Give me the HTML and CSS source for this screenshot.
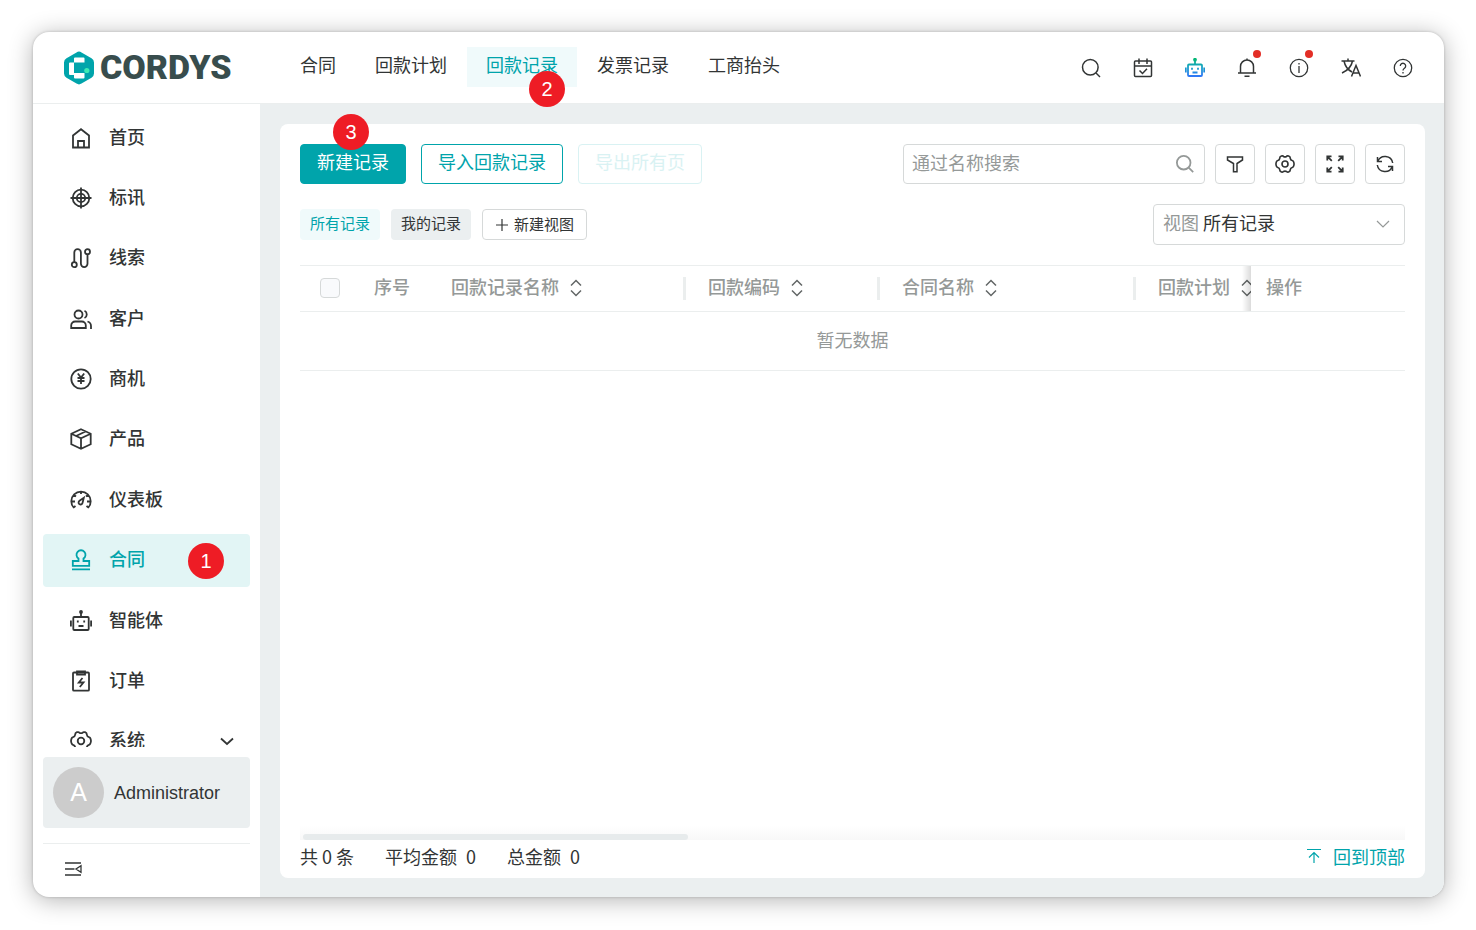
FILE: index.html
```html
<!DOCTYPE html>
<html lang="zh-CN">
<head>
<meta charset="utf-8">
<title>CORDYS 回款记录</title>
<link rel="stylesheet" href="styles.css">
</head>
<body>
<div class="window">
  <header class="topbar">
    <a class="logo" href="#">
      <svg class="logo-mark" viewBox="0 0 32 34"><path d="M13.500 1.400Q16-.2 18.500 1.400L28.500 7.300Q31 8.800 31 11.500v11q0 2.700-2.500 4.200l-10 5.900Q16 34.200 13.500 32.600L3.500 26.700Q1 25.200 1 22.500v-11Q1 8.800 3.500 7.300z" fill="#00a4ab"/><path d="M11 7.500q0-1 1-1H20.500q1 0 1 1v4H11v10.500h10.500v4.500q0 1-1 1H12q-1 0-1-1V24H7q-1 0-1-1V12.500q0-1 1-1h4z" fill="#fff"/><circle cx="23.800" cy="19.500" r="2.600" fill="#3ceab4"/></svg>
      <span class="logo-text">CORDYS</span>
    </a>
    <nav class="tabs">
      <a class="tab" href="#">合同</a>
      <a class="tab" href="#">回款计划</a>
      <a class="tab active" href="#">回款记录<span class="step step-tab">2</span></a>
      <a class="tab" href="#">发票记录</a>
      <a class="tab" href="#">工商抬头</a>
    </nav>
    <div class="actions">
      <button class="icon-btn" aria-label="搜索"><svg viewBox="0 0 20 20"><circle cx="9.300" cy="9.300" r="7.800"/><path d="m15 15 4 4"/></svg></button>
      <button class="icon-btn" aria-label="日程"><svg viewBox="0 0 20 20"><rect x="1.500" y="3" width="17" height="15.500" rx="1"/><path d="M1.500 8h17M6 .5V6M14 .5V6M6.500 12.500l3 3 4.500-4.700"/></svg></button>
      <button class="icon-btn" aria-label="智能助手"><svg viewBox="0 0 20 20" class="bot"><defs><linearGradient id="botGrad" gradientUnits="userSpaceOnUse" x1="0" y1="0" x2="0" y2="20"><stop offset="0" stop-color="#00b96b"/><stop offset=".4" stop-color="#14a5c0"/><stop offset="1" stop-color="#3370ff"/></linearGradient></defs><rect x="3" y="6.500" width="14" height="11.500" rx="1"/><path d="M10 2v4.500M.8 9.500v5M19.200 9.500v5M7 9.700v2M13 9.700v2M7.500 14.500h5"/><circle cx="10" cy="1.800" r="1"/></svg></button>
      <button class="icon-btn" aria-label="通知"><svg viewBox="0 0 20 20"><path d="M1 15h18M3.500 15V8.500a6.500 6.500 0 0 1 13 0V15M10 .5v2M7.500 18.300h5"/></svg><span class="dot"></span></button>
      <button class="icon-btn thin" aria-label="信息"><svg viewBox="0 0 20 20"><circle cx="10" cy="10" r="8.700"/><path d="M10 8v7"/><path d="M10 5v1.500"/></svg><span class="dot"></span></button>
      <button class="icon-btn" aria-label="语言"><svg viewBox="0 0 20 20"><path d="M.5 3h13M7 .5V3M3 3c1 5 4 9 8 11M11.500 3C10.500 8.500 6.500 12.500 1 15M10.500 18.500l4.500-11 4.500 11M12 15h6"/></svg></button>
      <button class="icon-btn thin" aria-label="帮助"><svg viewBox="0 0 20 20"><circle cx="10" cy="10" r="8.700"/><path d="M7.300 8a2.700 2.700 0 1 1 4.200 2.200Q10 11.200 10 12.500M10 14v1.500"/></svg></button>
    </div>
  </header>

  <div class="body">
    <aside class="sidebar">
      <nav class="menu">
        <div class="menu-list">
        <a class="item" href="#"><svg viewBox="0 0 22 22"><path d="M3 8.500l8-6.300 8 6.300v12H3zM8 20.500V14h6v6.500"/></svg>首页</a>
        <a class="item" href="#"><svg viewBox="0 0 22 22"><circle cx="11" cy="11" r="8.300"/><circle cx="11" cy="11" r="4.200"/><path d="M11 .5v21M.5 11h21"/></svg>标讯</a>
        <a class="item" href="#"><svg viewBox="0 0 22 22"><circle cx="4.300" cy="17.700" r="2.500"/><circle cx="17.500" cy="4.700" r="2.500"/><path d="M4.300 15V5.500a3.300 3.300 0 0 1 6.600 0v11.300a3.300 3.300 0 0 0 6.600 0V7.500"/></svg>线索</a>
        <a class="item" href="#"><svg viewBox="0 0 22 22"><circle cx="8.500" cy="6.500" r="4"/><path d="M1.200 20v-2.500a4 4 0 0 1 4-4h6.600a4 4 0 0 1 4 4V20zM14.500 2.800a4 4 0 0 1 0 7.200M17.500 13.500q3.500 1 3.500 4.500v3"/></svg>客户</a>
        <a class="item" href="#"><svg viewBox="0 0 22 22"><circle cx="11" cy="11" r="9.700"/><path d="m7.800 5.500 3.200 4 3.200-4M11 9.500V16M7.500 10h7M7.500 13h7"/></svg>商机</a>
        <a class="item" href="#"><svg viewBox="0 0 22 22"><path d="m11 1.300 9.700 4.500v10.500L11 20.800l-9.700-4.500V5.800zM1.300 5.800l9.700 4.500 9.700-4.500M11 10.300v10.500M6 8l9.500-4.500"/></svg>产品</a>
        <a class="item" href="#"><svg viewBox="0 0 22 22"><path d="M4 19a9.700 9.700 0 1 1 14 0M11 2.500V5M4 6l2 1.500M18 6l-2 1.500M1.500 12.500H5M17 12.500h3.500M3.500 18.500l2-1.500M18.500 18.500l-2-1.500M13.800 8.800 12.500 14a2 2 0 1 1-3-2.200z"/></svg>仪表板</a>
        <a class="item active" href="#"><svg viewBox="0 0 22 22"><path d="M2.800 16.800V12h5.700V9.500a4.500 4.500 0 1 1 5 0V12h5.700v4.800zM2 20.300h18"/></svg>合同<span class="step step-menu">1</span></a>
        <a class="item" href="#"><svg viewBox="0 0 22 22"><rect x="3.300" y="7" width="15.400" height="13" rx="1"/><path d="M11 2v5M.9 10.500v6M21.100 10.500v6M7.800 10.500v2M14.200 10.500v2M8.500 16h5"/><circle cx="11" cy="2" r="1"/></svg>智能体</a>
        <a class="item" href="#"><svg viewBox="0 0 22 22"><rect x="3" y="2.500" width="16" height="18.200" rx="1"/><path d="M7 1.300h8v3.200H7zM12.500 8 8.800 12.500h4.700L9.800 17"/></svg>订单</a>
        <a class="item" href="#"><svg viewBox="0 0 22 22"><path d="M7 2.200Q9 1.800 9.300 2.700q1.700 1 3.400 0Q13 1.800 15 2.200q2 .8 1.800 2.500.3 2 2.200 2.500 1.600.3 2 3.800-.4 3.500-2 3.800-1.900.5-2.200 2.500.2 1.700-1.800 2.500-2 .4-2.300-.5-1.700-1-3.400 0-.3.900-2.300.5-2-.8-1.800-2.500-.3-2-2.200-2.500Q1.400 14.500 1 11q.4-3.500 2-3.800 1.900-.5 2.200-2.500Q5 3 7 2.200z"/><circle cx="11" cy="11" r="3.300"/></svg>系统<svg class="caret" viewBox="0 0 14 14"><path d="m1 4.500 6 5.500 6-5.500"/></svg></a>
        </div>
      </nav>
      <button class="user"><span class="avatar">A</span>Administrator</button>
      <div class="collapse"><button class="icon-btn thin" aria-label="收起菜单"><svg viewBox="0 0 20 20"><path d="M2 4h16M2 10h9.500M2 16h16M18 6.800v6.400L13 10z"/></svg></button></div>
    </aside>

    <main class="content">
      <section class="card">
        <div class="toolbar">
          <div class="buttons">
            <button class="btn primary">新建记录<span class="step step-new">3</span></button>
            <button class="btn">导入回款记录</button>
            <button class="btn" disabled>导出所有页</button>
          </div>
          <div class="tools">
            <label class="search"><input type="text" placeholder="通过名称搜索" aria-label="通过名称搜索"><svg viewBox="0 0 20 20"><circle cx="8.700" cy="8.700" r="6.800"/><path d="m13.700 13.700 4.500 4.500"/></svg></label>
            <button class="tool" aria-label="筛选"><svg viewBox="0 0 20 20"><path d="M2.500 3h15v3L12 9.500v8.200H8.500V9.500L2.500 6z"/></svg></button>
            <button class="tool bold" aria-label="设置"><svg viewBox="0 0 22 22"><path d="M7 2.200Q9 1.800 9.300 2.700q1.700 1 3.400 0Q13 1.800 15 2.200q2 .8 1.800 2.500.3 2 2.200 2.500 1.600.3 2 3.800-.4 3.500-2 3.800-1.900.5-2.200 2.500.2 1.700-1.800 2.500-2 .4-2.300-.5-1.700-1-3.400 0-.3.900-2.300.5-2-.8-1.800-2.500-.3-2-2.200-2.500Q1.400 14.500 1 11q.4-3.500 2-3.800 1.900-.5 2.200-2.500Q5 3 7 2.200z"/><circle cx="11" cy="11" r="3.300"/></svg></button>
            <button class="tool bold" aria-label="全屏"><svg viewBox="0 0 20 20"><path d="M2.300 6.500V2.300h4.200M2.300 2.300l4.500 4.500M13.500 2.300h4.200v4.200M17.700 2.300l-4.500 4.500M2.300 13.500v4.200h4.200M2.300 17.700l4.500-4.500M17.700 13.500v4.200h-4.200M17.700 17.700l-4.500-4.500"/></svg></button>
            <button class="tool" aria-label="刷新"><svg viewBox="0 0 20 20"><path d="M2.500 3v4.500H7M2.700 7.500a7.800 7.800 0 0 1 15 1.500M17.500 17v-4.500H13M17.300 12.500a7.800 7.800 0 0 1-15-1.500"/></svg></button>
          </div>
        </div>

        <div class="views">
          <div class="chips">
            <button class="chip active">所有记录</button>
            <button class="chip">我的记录</button>
            <button class="chip add"><svg viewBox="0 0 14 14"><path d="M7 1v12M1 7h12"/></svg>新建视图</button>
          </div>
          <div class="view-select">
            <label for="view">视图</label>
            <select id="view"><option>所有记录</option></select>
            <svg viewBox="0 0 14 14"><path d="m1 4 6 6 6-6"/></svg>
          </div>
        </div>

        <div class="table-wrap">
          <table class="grid">
            <colgroup><col class="c-check"><col class="c-no"><col class="c-name"><col class="c-code"><col class="c-contract"><col class="c-plan"><col></colgroup>
            <thead>
              <tr>
                <th><div class="cell"><input type="checkbox" class="check" aria-label="全选"></div></th>
                <th><div class="cell">序号</div></th>
                <th><div class="cell">回款记录名称<svg class="sort" viewBox="0 0 12 18"><path d="m1 6.500 5-5 5 5M1 11.500l5 5 5-5"/></svg><i class="divider"></i></div></th>
                <th><div class="cell">回款编码<svg class="sort" viewBox="0 0 12 18"><path d="m1 6.500 5-5 5 5M1 11.500l5 5 5-5"/></svg><i class="divider"></i></div></th>
                <th><div class="cell">合同名称<svg class="sort" viewBox="0 0 12 18"><path d="m1 6.500 5-5 5 5M1 11.500l5 5 5-5"/></svg><i class="divider"></i></div></th>
                <th><div class="cell">回款计划<svg class="sort" viewBox="0 0 12 18"><path d="m1 6.500 5-5 5 5M1 11.500l5 5 5-5"/></svg></div></th>
                <th class="fixed"><div class="cell">操作</div></th>
              </tr>
            </thead>
            <tbody><tr><td colspan="7">暂无数据</td></tr></tbody>
          </table>
        </div>

        <div class="scroll-track"><div class="scroll-thumb"></div></div>
        <footer class="summary">
          <span>共 0 条</span>
          <span class="stat"><span>平均金额</span><span>0</span></span>
          <span class="stat"><span>总金额</span><span>0</span></span>
          <a class="to-top" href="#"><svg viewBox="0 0 16 16"><path d="M1 1.500h14M8 15V5M3 9.500 8 4.500l5 5"/></svg>回到顶部</a>
        </footer>
      </section>
    </main>
  </div>
</div>
</body>
</html>
```
FILE: styles.css
```css
* { box-sizing: border-box; }
:root {
  --teal: #00a4ab;
  --ink: #323535;
  --muted: #959998;
  --line: #ebeeee;
  --border: #d6d9d9;
  --panel: #ebeff0;
}
body {
  margin: 0;
  height: 100vh;
  padding: 32px 32px 33px 33px;
  display: flex;
  background: #fff;
  color: var(--ink);
  font: 18px/24px "Liberation Sans", "Noto Sans CJK SC", sans-serif;
}
a { color: inherit; text-decoration: none; }
button, input, select { font: inherit; color: inherit; }
button { padding: 0; border: 0; background: none; cursor: pointer; }
svg { fill: none; stroke: currentColor; stroke-width: 1.5; flex: none; }

.window {
  flex: 1;
  min-width: 0;
  display: flex;
  flex-direction: column;
  border-radius: 16px;
  overflow: hidden;
  background: #fff;
  box-shadow: 0 0 3px rgba(0, 0, 0, .2), 0 3px 24px rgba(0, 0, 0, .3);
}

/* top bar */
.topbar {
  height: 72px;
  flex: none;
  display: flex;
  align-items: center;
  border-bottom: 1px solid var(--line);
}
.logo {
  width: 248px;
  padding-left: 30px;
  display: flex;
  align-items: center;
  gap: 5px;
  color: #384d4d;
}
.logo-mark { width: 32px; height: 34px; stroke: none; }
.logo-text { padding-bottom: 2px; font: 900 34px/38px Roboto, sans-serif; }
.tabs { display: flex; gap: 1px; padding-bottom: 2px; }
.tab { position: relative; padding: 7px 19px 9px; }
.tab.active { background: #f0fafb; color: var(--teal); }
.actions { margin-left: auto; margin-right: 31px; display: flex; gap: 32px; }
.icon-btn { position: relative; width: 20px; height: 20px; }
.icon-btn svg { display: block; width: 20px; height: 20px; }
.icon-btn.thin svg { stroke-width: 1.3; }
.icon-btn .bot { stroke: url(#botGrad); stroke-width: 1.8; }
.dot {
  position: absolute;
  top: -8px;
  right: -4px;
  width: 8px;
  height: 8px;
  border-radius: 50%;
  background: #e32e26;
}

/* numbered markers */
.step {
  position: absolute;
  z-index: 2;
  width: 36px;
  height: 36px;
  border-radius: 50%;
  background: #ee1c25;
  color: #fff;
  font: 20px/36px "Liberation Sans", sans-serif;
  text-align: center;
}
.step-tab { right: 12px; top: 24px; }
.step-menu { right: 26px; top: 9px; }
.step-new { left: 32px; top: -31px; }

/* side bar */
.body { flex: 1; min-height: 0; display: flex; }
.sidebar { width: 227px; flex: none; padding: 7px 10px 0; display: flex; flex-direction: column; }
.menu { flex: 1; min-height: 0; overflow: hidden; display: flex; flex-direction: column; }
.menu-list {
  flex: 1;
  margin-bottom: -21px;
  display: flex;
  flex-direction: column;
  justify-content: space-between;
}
.item {
  position: relative;
  height: 53px;
  flex: none;
  padding: 0 16px 0 27px;
  display: flex;
  align-items: center;
  gap: 17px;
  border-radius: 4px;
  font-weight: 500;
}
.item svg { width: 22px; height: 22px; stroke-width: 1.8; }
.item .caret { width: 14px; height: 14px; margin-left: auto; }
.item.active { background: #e2f5f5; color: var(--teal); }
.user {
  margin-top: 10px;
  height: 71px;
  flex: none;
  padding: 0 10px;
  display: flex;
  align-items: center;
  gap: 10px;
  border-radius: 4px;
  background: var(--panel);
}
.avatar {
  width: 51px;
  height: 51px;
  border-radius: 50%;
  background: #ccc;
  color: #fff;
  font-size: 25px;
  line-height: 51px;
}
.collapse {
  margin-top: 15px;
  height: 54px;
  flex: none;
  padding: 0 20px 3px;
  display: flex;
  align-items: center;
  border-top: 1px solid var(--line);
}

/* content */
.content { flex: 1; min-width: 0; padding: 20px 19px 19px 20px; display: flex; background: var(--panel); }
.card {
  flex: 1;
  min-width: 0;
  padding: 20px 20px 0;
  display: flex;
  flex-direction: column;
  border-radius: 8px;
  background: #fff;
}
.toolbar, .views { display: flex; justify-content: space-between; align-items: center; }
.buttons { display: flex; gap: 15px; }
.btn {
  position: relative;
  height: 40px;
  padding: 0 16px 2px;
  border: 1px solid var(--teal);
  border-radius: 4px;
  color: var(--teal);
}
.btn.primary { background: var(--teal); color: #fff; }
.btn:disabled { border-color: #d9f2f3; color: #d9f2f3; }
.tools { display: flex; gap: 10px; }
.search, .tool, .view-select {
  border: 1px solid var(--border);
  border-radius: 4px;
  display: flex;
  align-items: center;
}
.search { width: 302px; height: 40px; padding: 0 9px 0 8px; }
.search input { flex: 1; min-width: 0; padding: 0; border: 0; outline: 0; background: none; }
.search input::placeholder { color: var(--muted); }
.search svg { width: 20px; height: 20px; color: var(--muted); stroke-width: 1.8; }
.tool { width: 40px; height: 40px; justify-content: center; }
.tool svg { width: 20px; height: 20px; }
.tool.bold svg { stroke-width: 1.8; }

.views { margin-top: 20px; }
.chips { display: flex; gap: 11px; }
.chip {
  height: 31px;
  padding: 0 10px 2px;
  border-radius: 4px;
  background: var(--panel);
  font-size: 15px;
}
.chip.active { background: #f0fafb; color: var(--teal); }
.chip.add {
  padding: 0 12px;
  display: flex;
  align-items: center;
  gap: 5px;
  border: 1px solid var(--border);
  background: #fff;
}
.chip.add svg { width: 14px; height: 14px; stroke-width: 1.2; }
.view-select { width: 252px; height: 41px; padding: 0 14px 2px 9px; gap: 4px; }
.view-select label { color: var(--muted); }
.view-select select { flex: 1; appearance: none; border: 0; padding: 0; outline: 0; background: none; }
.view-select svg { width: 14px; height: 14px; color: var(--muted); stroke-width: 1.2; }

/* table */
.table-wrap { flex: 1; min-height: 0; margin-top: 20px; overflow: hidden; }
.grid { width: 100%; table-layout: fixed; border-collapse: collapse; color: var(--muted); }
.c-check { width: 54px; }
.c-no { width: 77px; }
.c-name { width: 257px; }
.c-code { width: 194px; }
.c-contract { width: 256px; }
.c-plan { width: 113px; }
.grid th {
  height: 46px;
  padding: 0 2px 1px 20px;
  border-top: 1px solid var(--line);
  border-bottom: 1px solid var(--line);
  font-weight: 500;
}
.grid td { height: 59px; padding: 0; border-bottom: 1px solid var(--line); text-align: center; }
.cell { display: flex; align-items: center; white-space: nowrap; }
.check {
  appearance: none;
  width: 20px;
  height: 20px;
  margin: 0;
  border: 1px solid var(--border);
  border-radius: 4px;
  background: #f9fafc;
}
.sort { width: 12px; height: 18px; margin-left: 11px; color: #626666; }
.divider { width: 3px; height: 23px; margin-left: auto; background: var(--line); }
.grid th.fixed { position: relative; padding-left: 15px; background: #fff; }
.fixed::before {
  content: "";
  position: absolute;
  top: 0;
  bottom: 0;
  left: -9px;
  width: 9px;
  background: linear-gradient(to left, rgba(0, 0, 0, .14), transparent);
}

/* footer */
.scroll-track {
  height: 14px;
  flex: none;
  padding: 8px 3px 0;
  background: linear-gradient(#fff, #f8f8f8);
}
.scroll-thumb { width: 35%; height: 6px; border-radius: 3px; background: #e7ebec; }
.summary {
  height: 38px;
  flex: none;
  padding-bottom: 6px;
  display: flex;
  align-items: center;
  gap: 31px;
  font-family: "Noto Sans CJK SC", sans-serif;
}
.stat { display: flex; gap: 9px; }
.to-top { margin-left: auto; display: flex; align-items: center; gap: 11px; color: var(--teal); }
.to-top svg { width: 16px; height: 16px; stroke-width: 1.2; }
```
